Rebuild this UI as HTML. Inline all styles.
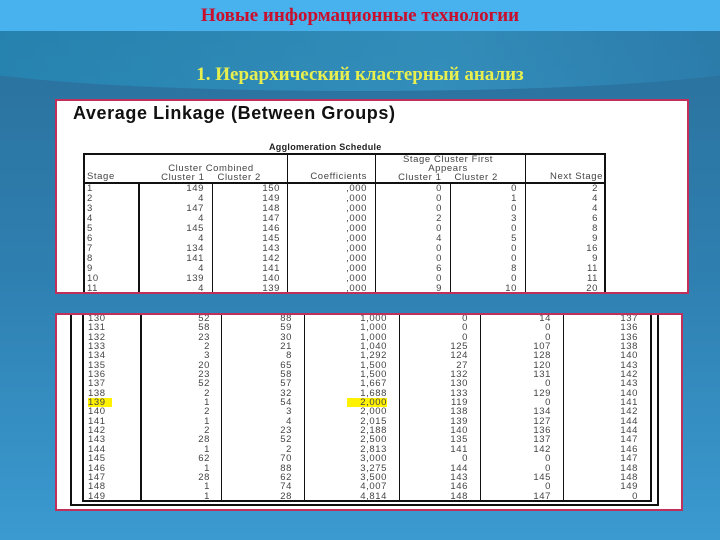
<!DOCTYPE html>
<html><head><meta charset="utf-8"><style>
*{margin:0;padding:0;box-sizing:border-box}
body{width:720px;height:540px;overflow:hidden;position:relative;background:linear-gradient(180deg,#2a6f9a 0%,#2e7fb0 50%,#3b9ad0 100%);font-family:"Liberation Sans",sans-serif}
.bar{position:absolute;left:0;top:0;width:720px;height:31px;background:#48b2ee;text-align:center;font:bold 19px/31px "Liberation Serif",serif;color:#c8102e}
.wave{position:absolute;left:-50px;top:31px;width:820px;height:60px;border-radius:0 0 50% 50%;background:linear-gradient(90deg,#1f8fbc,#3aa7d4 60%,#2a7fb0);opacity:.5}
.sub{position:absolute;left:0;width:720px;top:64px;text-align:center;font:bold 19px "Liberation Serif",serif;color:#e8f050}
.box{position:absolute;background:#fff;border:2px solid #c0305a;overflow:hidden}
table{position:absolute;border-collapse:collapse;font-size:9.5px;color:#444;letter-spacing:0.6px;table-layout:fixed}
td{padding:0 8px 0 4px;text-align:right;height:10px;line-height:10px;white-space:nowrap;overflow:hidden}
td:first-child{text-align:left}
.t2 td{height:9.35px;line-height:9.35px;padding:0 12px 0 4px}
.hl{background:#fff200}
</style></head><body>
<div class="wave"></div>
<div class="bar">Новые информационные технологии</div>
<div class="sub">1. Иерархический кластерный анализ</div>

<div class="box" style="left:55px;top:99px;width:634px;height:195px">
<div style="position:absolute;left:16px;top:2px;font:bold 18px 'Liberation Sans',sans-serif;color:#111;letter-spacing:0.6px">Average Linkage (Between Groups)</div>
<div style="position:absolute;left:212px;top:41px;font:bold 9px 'Liberation Sans';color:#222;letter-spacing:0.3px">Agglomeration Schedule</div>
<div style="position:absolute;left:26px;top:52px;width:523px;height:145px;border:2px solid #111;border-bottom:none"></div>
<table style="left:26px;top:54px;width:523px">
<colgroup><col style="width:55px"><col style="width:74px"><col style="width:76px"><col style="width:87px"><col style="width:75px"><col style="width:75px"><col style="width:81px"></colgroup>
<tr style="height:28px"><td style="vertical-align:bottom">Stage</td><td colspan="2" style="text-align:center;vertical-align:bottom;line-height:9px">Cluster Combined<br>Cluster 1 &nbsp;&nbsp; Cluster 2</td><td style="vertical-align:bottom">Coefficients</td><td colspan="2" style="text-align:center;vertical-align:bottom;line-height:9px">Stage Cluster First<br>Appears<br>Cluster 1 &nbsp;&nbsp; Cluster 2</td><td style="vertical-align:bottom;padding-right:3px">Next Stage</td></tr>
<tbody style="border-top:2px solid #111">
<tr><td>1</td><td>149</td><td>150</td><td>,000</td><td>0</td><td>0</td><td>2</td></tr>
<tr><td>2</td><td>4</td><td>149</td><td>,000</td><td>0</td><td>1</td><td>4</td></tr>
<tr><td>3</td><td>147</td><td>148</td><td>,000</td><td>0</td><td>0</td><td>4</td></tr>
<tr><td>4</td><td>4</td><td>147</td><td>,000</td><td>2</td><td>3</td><td>6</td></tr>
<tr><td>5</td><td>145</td><td>146</td><td>,000</td><td>0</td><td>0</td><td>8</td></tr>
<tr><td>6</td><td>4</td><td>145</td><td>,000</td><td>4</td><td>5</td><td>9</td></tr>
<tr><td>7</td><td>134</td><td>143</td><td>,000</td><td>0</td><td>0</td><td>16</td></tr>
<tr><td>8</td><td>141</td><td>142</td><td>,000</td><td>0</td><td>0</td><td>9</td></tr>
<tr><td>9</td><td>4</td><td>141</td><td>,000</td><td>6</td><td>8</td><td>11</td></tr>
<tr><td>10</td><td>139</td><td>140</td><td>,000</td><td>0</td><td>0</td><td>11</td></tr>
<tr><td>11</td><td>4</td><td>139</td><td>,000</td><td>9</td><td>10</td><td>20</td></tr>
</tbody></table>
<div style="position:absolute;left:81px;top:82px;width:2px;height:120px;background:#111"></div>
<div style="position:absolute;left:155px;top:82px;width:1px;height:120px;background:#111"></div>
<div style="position:absolute;left:230px;top:52px;width:1px;height:150px;background:#111"></div>
<div style="position:absolute;left:318px;top:52px;width:1px;height:150px;background:#111"></div>
<div style="position:absolute;left:393px;top:82px;width:1px;height:120px;background:#111"></div>
<div style="position:absolute;left:468px;top:52px;width:1px;height:150px;background:#111"></div>
</div>

<div class="box" style="left:55px;top:313px;width:628px;height:198px">
<div style="position:absolute;left:13px;top:-2px;width:589px;height:193px;border:2px solid #111;border-top:none"></div>
<div style="position:absolute;left:25px;top:-2px;width:570px;height:189px;border:2px solid #111;border-top:none"></div>
<table class="t2" style="left:27px;top:-1px;width:566px">
<colgroup><col style="width:57px"><col style="width:81px"><col style="width:82px"><col style="width:95px"><col style="width:81px"><col style="width:83px"><col style="width:87px"></colgroup>
<tr><td>130</td><td>52</td><td>88</td><td>1,000</td><td>0</td><td>14</td><td>137</td></tr>
<tr><td>131</td><td>58</td><td>59</td><td>1,000</td><td>0</td><td>0</td><td>136</td></tr>
<tr><td>132</td><td>23</td><td>30</td><td>1,000</td><td>0</td><td>0</td><td>136</td></tr>
<tr><td>133</td><td>2</td><td>21</td><td>1,040</td><td>125</td><td>107</td><td>138</td></tr>
<tr><td>134</td><td>3</td><td>8</td><td>1,292</td><td>124</td><td>128</td><td>140</td></tr>
<tr><td>135</td><td>20</td><td>65</td><td>1,500</td><td>27</td><td>120</td><td>143</td></tr>
<tr><td>136</td><td>23</td><td>58</td><td>1,500</td><td>132</td><td>131</td><td>142</td></tr>
<tr><td>137</td><td>52</td><td>57</td><td>1,667</td><td>130</td><td>0</td><td>143</td></tr>
<tr><td>138</td><td>2</td><td>32</td><td>1,688</td><td>133</td><td>129</td><td>140</td></tr>
<tr><td><span class="hl">139&nbsp;&nbsp;</span></td><td>1</td><td>54</td><td><span class="hl">&nbsp;&nbsp;&nbsp;&nbsp;2,000</span></td><td>119</td><td>0</td><td>141</td></tr>
<tr><td>140</td><td>2</td><td>3</td><td>2,000</td><td>138</td><td>134</td><td>142</td></tr>
<tr><td>141</td><td>1</td><td>4</td><td>2,015</td><td>139</td><td>127</td><td>144</td></tr>
<tr><td>142</td><td>2</td><td>23</td><td>2,188</td><td>140</td><td>136</td><td>144</td></tr>
<tr><td>143</td><td>28</td><td>52</td><td>2,500</td><td>135</td><td>137</td><td>147</td></tr>
<tr><td>144</td><td>1</td><td>2</td><td>2,813</td><td>141</td><td>142</td><td>146</td></tr>
<tr><td>145</td><td>62</td><td>70</td><td>3,000</td><td>0</td><td>0</td><td>147</td></tr>
<tr><td>146</td><td>1</td><td>88</td><td>3,275</td><td>144</td><td>0</td><td>148</td></tr>
<tr><td>147</td><td>28</td><td>62</td><td>3,500</td><td>143</td><td>145</td><td>148</td></tr>
<tr><td>148</td><td>1</td><td>74</td><td>4,007</td><td>146</td><td>0</td><td>149</td></tr>
<tr><td>149</td><td>1</td><td>28</td><td>4,814</td><td>148</td><td>147</td><td>0</td></tr>
</table>
<div style="position:absolute;left:83px;top:0;width:2px;height:187px;background:#111"></div>
<div style="position:absolute;left:164px;top:0;width:1px;height:187px;background:#111"></div>
<div style="position:absolute;left:247px;top:0;width:1px;height:187px;background:#111"></div>
<div style="position:absolute;left:342px;top:0;width:1px;height:187px;background:#111"></div>
<div style="position:absolute;left:423px;top:0;width:1px;height:187px;background:#111"></div>
<div style="position:absolute;left:506px;top:0;width:1px;height:187px;background:#111"></div>
</div>
</body></html>
